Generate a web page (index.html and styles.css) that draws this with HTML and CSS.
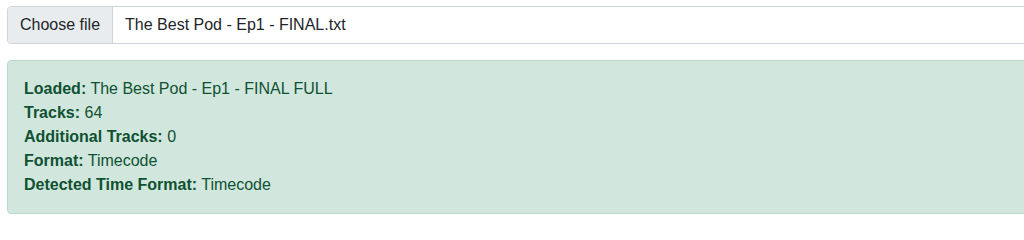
FILE: index.html
```html
<!DOCTYPE html>
<html lang="en">
<head>
<meta charset="utf-8">
<title>Loader</title>
<link rel="stylesheet" href="styles.css">
</head>
<body>
<div class="page">
  <div class="file-input">
    <span class="file-btn">Choose file</span>
    <span class="file-name">The Best Pod - Ep1 - FINAL.txt</span>
  </div>
  <div class="alert">
    <div><strong>Loaded:</strong> The Best Pod - Ep1 - FINAL FULL</div>
    <div><strong>Tracks:</strong> 64</div>
    <div><strong>Additional Tracks:</strong> 0</div>
    <div><strong>Format:</strong> Timecode</div>
    <div><strong>Detected Time Format:</strong> Timecode</div>
  </div>
</div>
</body>
</html>
```
FILE: styles.css
```css
html, body {
  margin: 0;
  padding: 0;
  overflow: hidden;
  background: #fff;
}
body {
  font-family: "Liberation Sans", Arial, sans-serif;
  font-size: 16px;
  line-height: 24px;
  color: #212529;
}
.page {
  padding: 6px 0 0 7px;
  width: 1100px;
}
.file-input {
  display: flex;
  align-items: stretch;
  height: 38px;
  box-sizing: border-box;
  border: 1px solid #ced4da;
  border-radius: 4px;
  overflow: hidden;
  margin-bottom: 16px;
  background: #fff;
}
.file-btn {
  display: flex;
  align-items: center;
  padding: 0 12px;
  background: #e9ecef;
  border-right: 1px solid #ced4da;
  color: #212529;
}
.file-name {
  display: flex;
  align-items: center;
  padding-left: 12px;
}
.alert {
  background: #d1e7dd;
  border: 1px solid #badbcc;
  border-radius: 4px;
  color: #0f5132;
  padding: 16px;
}
.alert strong {
  font-weight: bold;
}
```
